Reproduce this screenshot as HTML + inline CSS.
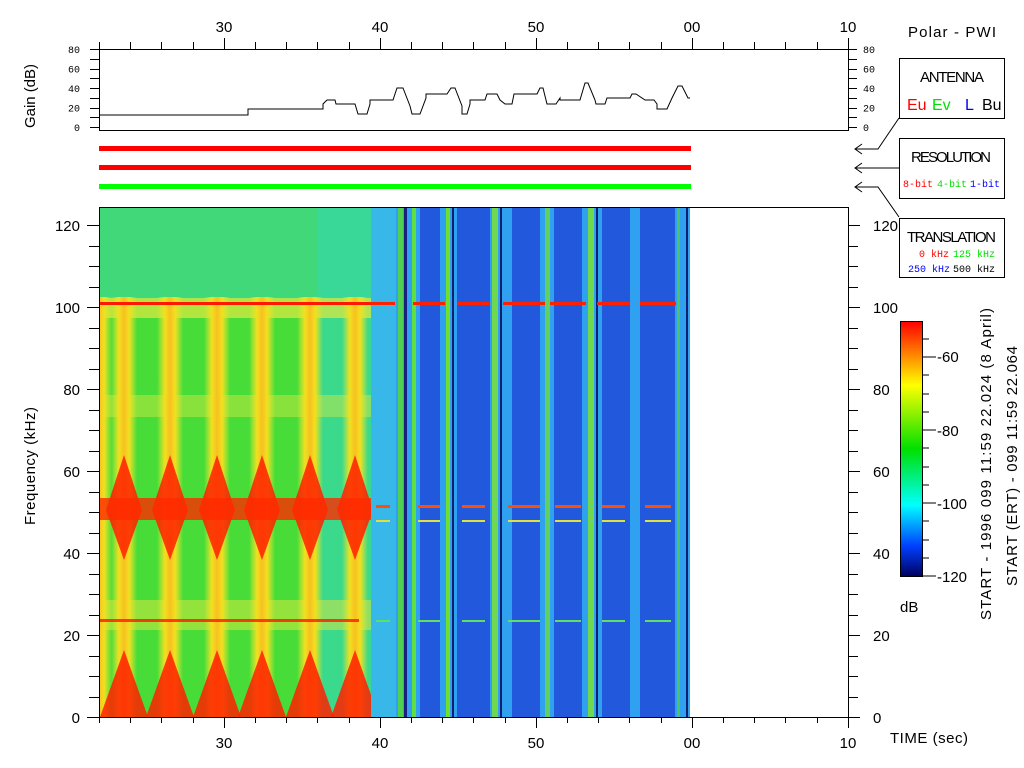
<!DOCTYPE html>
<html><head><meta charset="utf-8"><style>
html,body{margin:0;padding:0;background:#fff;width:1024px;height:768px;overflow:hidden}
svg{display:block}
text{font-family:"Liberation Sans",sans-serif;fill:#000}
.m{font-family:"Liberation Mono",monospace}
</style></head><body>
<svg id="s" width="1024" height="768" viewBox="0 0 1024 768" xmlns="http://www.w3.org/2000/svg">
<defs>
<clipPath id="sp"><rect x="99" y="207" width="591" height="510"/></clipPath>
<linearGradient id="cb" x1="0" y1="0" x2="0" y2="1">
<stop offset="0" stop-color="#ff0000"/><stop offset="0.25" stop-color="#ffff00"/>
<stop offset="0.5" stop-color="#00e000"/><stop offset="0.72" stop-color="#00ffff"/>
<stop offset="0.88" stop-color="#0040ff"/><stop offset="1" stop-color="#000060"/>
</linearGradient>
<linearGradient id="col" x1="0" y1="0" x2="1" y2="0">
<stop offset="0" stop-color="#e8e830" stop-opacity="0"/><stop offset="0.3" stop-color="#f0e020"/>
<stop offset="0.5" stop-color="#f8c020"/><stop offset="0.7" stop-color="#f0e020"/><stop offset="1" stop-color="#e8e830" stop-opacity="0"/>
</linearGradient>
<radialGradient id="red"><stop offset="0" stop-color="#ff1000"/><stop offset="0.6" stop-color="#ff2000" stop-opacity="0.85"/><stop offset="1" stop-color="#ff6000" stop-opacity="0"/></radialGradient>
</defs>
<g clip-path="url(#sp)">
<rect x="99" y="207" width="272" height="510" fill="#48dc38"/>
<rect x="99" y="207" width="272" height="92" fill="#40d878"/>
<rect x="318" y="207" width="53" height="510" fill="#38d8a0" opacity="0.8"/>
<g id="cols"></g>
<rect x="371" y="207" width="319" height="510" fill="#30a0f0"/>
<g id="blue"></g>
<g id="lines"></g>
</g>
<rect x="99.5" y="207.5" width="749" height="510" fill="none" stroke="#000"/>
<rect x="99.5" y="49.5" width="749" height="81" fill="none" stroke="#000"/>
<rect x="99" y="146" width="592" height="5" fill="#ff0000"/>
<rect x="99" y="165" width="592" height="5" fill="#ff0000"/>
<rect x="99" y="184" width="592" height="5" fill="#00ff00"/>
<polyline fill="none" stroke="#000" stroke-width="1" points="99,115 248,115 248,109 323,109 323,104 327,100 335,100 336,104 355,104 358,114 367,114 370,104 370,100 393,100 397,88 403,88 410,106 412,114 420,114 426,98 426,94 447,94 451,88 455,88 462,106 462,114 467,114 470,104 470,100 485,100 487,94 497,94 500,100 505,104 512,104 514,94 537,94 540,88 543,88 546,100 547,104 556,104 560,98 560,100 580,100 585,83 588,83 595,100 596,104 605,104 607,98 630,98 632,94 636,94 645,100 654,100 657,104 657,109 667,109 672,98 678,86 682,86 688,98 690,98"/>
<g id="ticks" stroke="#000" stroke-width="1"></g>
<g id="labs"></g>
<text x="908" y="37" font-size="15" textLength="88">Polar - PWI</text>
<rect x="899.5" y="58.5" width="105" height="60" fill="#fff" stroke="#000"/>
<text x="920" y="82" font-size="15" textLength="64">ANTENNA</text>
<text x="907" y="110" font-size="16" style="fill:#f00">Eu</text>
<text x="932" y="110" font-size="16" style="fill:#00e000">Ev</text>
<text x="965" y="110" font-size="16" style="fill:#0000ff">L</text>
<text x="982" y="110" font-size="16">Bu</text>
<rect x="899.5" y="138.5" width="105" height="60" fill="#fff" stroke="#000"/>
<text x="911" y="162" font-size="15" textLength="80">RESOLUTION</text>
<text x="903" y="187" font-size="10" class="m" style="fill:#f00">8-bit</text>
<text x="937" y="187" font-size="10" class="m" style="fill:#00e000">4-bit</text>
<text x="970" y="187" font-size="10" class="m" style="fill:#0000ff">1-bit</text>
<rect x="899.5" y="218.5" width="105" height="59" fill="#fff" stroke="#000"/>
<text x="907" y="242" font-size="15" textLength="89">TRANSLATION</text>
<text x="919" y="257" font-size="10" class="m" style="fill:#f00">0 kHz</text>
<text x="953" y="257" font-size="10" class="m" style="fill:#00e000">125 kHz</text>
<text x="908" y="272" font-size="10" class="m" style="fill:#0000ff">250 kHz</text>
<text x="953" y="272" font-size="10" class="m">500 kHz</text>
<g fill="none" stroke="#000">
<polyline points="899,118 878,149 855,149"/><polyline points="862,144 855,149 862,154"/>
<polyline points="899,168 855,168"/><polyline points="862,163 855,168 862,173"/>
<polyline points="899,217 878,187 855,187"/><polyline points="862,182 855,187 862,192"/>
</g>
<rect x="900.5" y="321.5" width="22" height="255" fill="url(#cb)" stroke="#000"/>
<g stroke="#000"><line x1="922" y1="339" x2="929" y2="339"/><line x1="922" y1="357" x2="936" y2="357"/><line x1="922" y1="375" x2="929" y2="375"/><line x1="922" y1="394" x2="929" y2="394"/><line x1="922" y1="412" x2="929" y2="412"/><line x1="922" y1="430" x2="936" y2="430"/><line x1="922" y1="448" x2="929" y2="448"/><line x1="922" y1="467" x2="929" y2="467"/><line x1="922" y1="485" x2="929" y2="485"/><line x1="922" y1="503" x2="936" y2="503"/><line x1="922" y1="521" x2="929" y2="521"/><line x1="922" y1="540" x2="929" y2="540"/><line x1="922" y1="558" x2="929" y2="558"/><line x1="922" y1="576" x2="936" y2="576"/></g>
<text x="937" y="362" font-size="15">-60</text>
<text x="937" y="436" font-size="15">-80</text>
<text x="937" y="509" font-size="15">-100</text>
<text x="937" y="582" font-size="15">-120</text>
<text x="900" y="612" font-size="15">dB</text>
<text transform="translate(991,620) rotate(-90)" font-size="15" textLength="312">START - 1996 099 11:59 22.024 (8 April)</text>
<text transform="translate(1017,586) rotate(-90)" font-size="15" textLength="240">START (ERT) - 099 11:59 22.064</text>
<text x="890" y="743" font-size="15" textLength="78">TIME (sec)</text>
<text transform="translate(35,525) rotate(-90)" font-size="15" textLength="118">Frequency (kHz)</text>
<text transform="translate(35,128) rotate(-90)" font-size="15" textLength="64">Gain (dB)</text>
</svg>
<script>
var NS="http://www.w3.org/2000/svg";
function el(p,t,a,txt){var e=document.createElementNS(NS,t);for(var k in a)e.setAttribute(k,a[k]);if(txt!=null)e.textContent=txt;document.getElementById(p).appendChild(e);return e;}
var cx=[99,124,170,217,262,310,355];
el('cols','rect',{x:99,y:298,width:272,height:20,fill:'#e0e840',opacity:0.7});
el('cols','rect',{x:99,y:395,width:272,height:22,fill:'#d8e840',opacity:0.45});
el('cols','rect',{x:99,y:600,width:272,height:30,fill:'#e0e840',opacity:0.5});
cx.forEach(function(x){el('cols','rect',{x:x-13,y:297,width:26,height:420,fill:'url(#col)'});});
[124,170,217,262,310,355].forEach(function(x){
 el('cols','path',{d:'M'+(x-18)+',510 L'+x+',455 L'+(x+18)+',510 L'+x+',560 Z',fill:'#ff2000',opacity:0.85});
 el('cols','path',{d:'M'+(x-24)+',717 L'+x+',650 L'+(x+24)+',717 Z',fill:'#ff2000',opacity:0.85});
});
el('cols','rect',{x:99,y:498,width:272,height:22,fill:'#ff2a00',opacity:0.8});
var dark=[[420,440],[457,490],[512,540],[554,582],[602,630],[640,675]];
dark.forEach(function(d){el('blue','rect',{x:d[0],y:207,width:d[1]-d[0],height:510,fill:'#2258dc'});});
el('blue','rect',{x:371,y:207,width:25,height:510,fill:'#38b8e8'});
var vl=[[398,5,'#50d050'],[404,3,'#1a2080'],[412,4,'#60e040'],[446,4,'#70e030'],[452,2,'#102070'],[492,6,'#70d850'],[500,2,'#102070'],[545,5,'#60d060'],[588,6,'#70d850'],[596,2,'#102070'],[677,3,'#50c070'],[686,2,'#102070']];
vl.forEach(function(v){el('blue','rect',{x:v[0],y:207,width:v[1],height:510,fill:v[2]});});
el('lines','rect',{x:99,y:302,width:272,height:3,fill:'#ff1800'});
el('lines','rect',{x:99,y:619,width:260,height:3,fill:'#ff1800',opacity:0.8});
[[371,395],[413,445],[457,490],[503,545],[550,586],[597,630],[640,676]].forEach(function(s){el('lines','rect',{x:s[0],y:302,width:s[1]-s[0],height:3,fill:'#ff2000'});
 el('lines','rect',{x:s[0]+5,y:505,width:s[1]-s[0]-10,height:3,fill:'#ff5000'});
 el('lines','rect',{x:s[0]+5,y:520,width:s[1]-s[0]-10,height:2,fill:'#e0e040'});
 el('lines','rect',{x:s[0]+5,y:620,width:s[1]-s[0]-10,height:2,fill:'#60e060'});});
function ln(x1,y1,x2,y2){el('ticks','line',{x1:x1,y1:y1,x2:x2,y2:y2});}
for(var i=0;i<=24;i++){var t=22+i*2;var x=99+(t-22)*15.6;if(x>849)break;x=Math.round(x)+.5;var maj=(t%10==0);
 ln(x,717,x,maj?728:723);ln(x,49,x,maj?38:42);}
for(var k=0;k<=24;k++){var y=Math.round(717-k*20.5)+.5;if(y<207)break;var maj=(k%4==0);ln(99,y,maj?87:89,y);ln(848,y,maj?860:858,y);}
for(var g=0;g<=8;g++){var y=Math.round(127-g*9.75)+.5;ln(99,y,90,y);ln(848,y,857,y);}
var tl=[[224,'30'],[380,'40'],[536,'50'],[692,'00'],[848,'10']];
tl.forEach(function(a){el('labs','text',{x:a[0],y:32,'font-size':15,'text-anchor':'middle'},a[1]);el('labs','text',{x:a[0],y:748,'font-size':15,'text-anchor':'middle'},a[1]);});
for(var f=0;f<=120;f+=20){var y=717-f*4.1+6;el('labs','text',{x:80,y:y,'font-size':15,'text-anchor':'end'},f);el('labs','text',{x:873,y:y,'font-size':15},f);}
for(var g=0;g<=80;g+=20){var y=127-g*0.975+4;el('labs','text',{x:80,y:y,'font-size':10,'text-anchor':'end','class':'m'},g);el('labs','text',{x:863,y:y,'font-size':10,'class':'m'},g);}
</script>
</body></html>
